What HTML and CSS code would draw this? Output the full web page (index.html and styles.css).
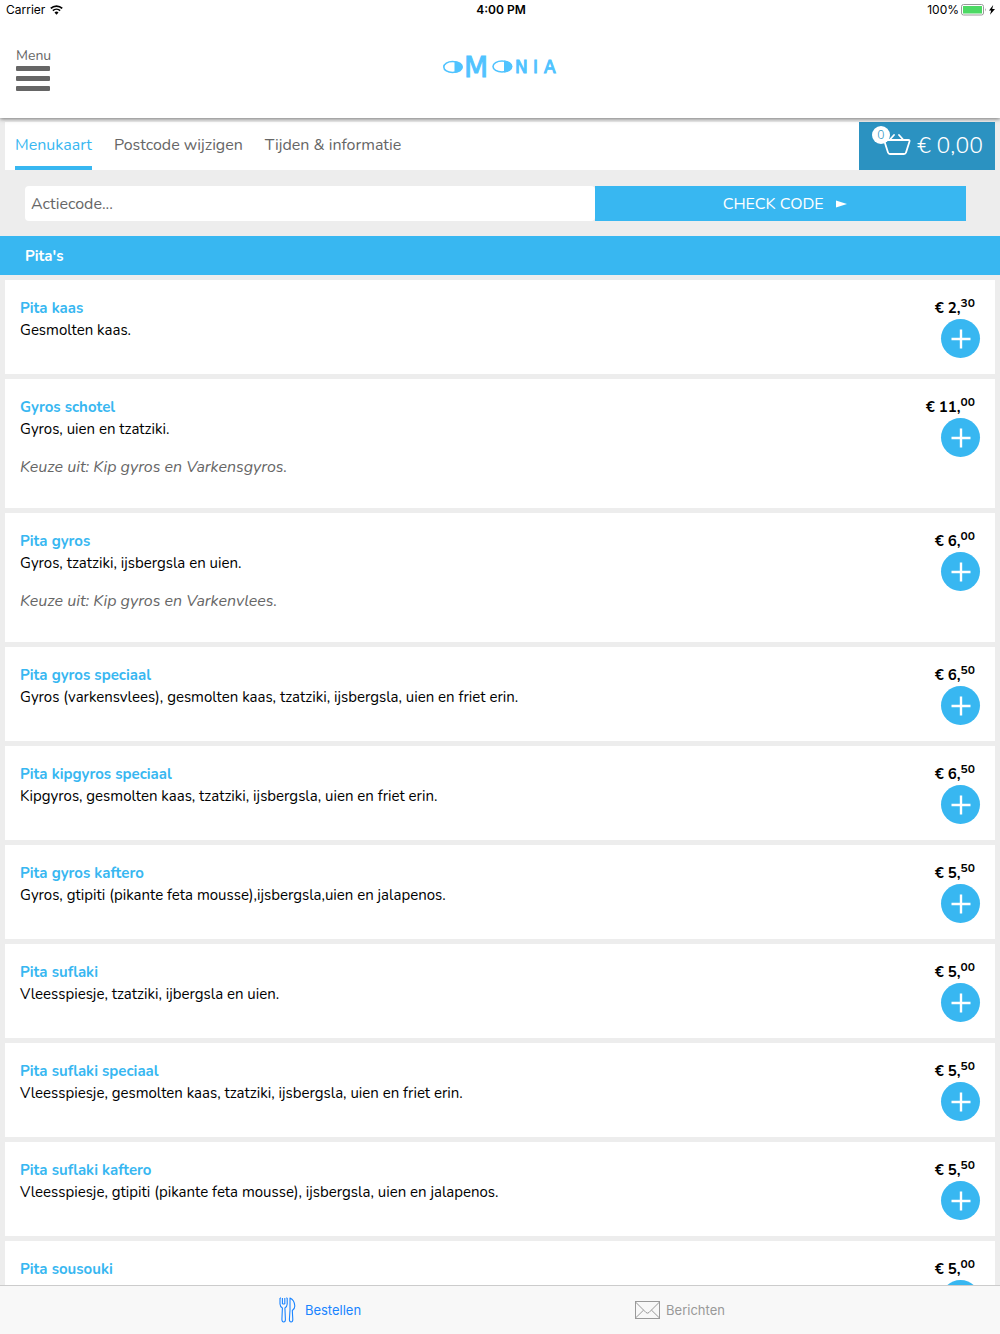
FILE: index.html
```html
<!DOCTYPE html>
<html lang="nl">
<head>
  <meta charset="UTF-8" />
  <meta name="viewport" content="width=device-width, initial-scale=1.0"/>
  <title>Omonia</title>
  <link rel="stylesheet" href="styles.css">
</head>
<body>
  <!-- Status bar -->
  <div class="status">
    <div class="status-left">
      <span>Carrier</span>
      <svg width="13" height="10" viewBox="0 0 13 10">
        <path d="M0.8 3.4 A8.2 8.2 0 0 1 12.2 3.4" fill="none" stroke="#000" stroke-width="1.8"/>
        <path d="M2.9 5.7 A5.2 5.2 0 0 1 10.1 5.7" fill="none" stroke="#000" stroke-width="1.7"/>
        <path d="M4.5 7.5 A2.9 2.9 0 0 1 8.5 7.5 L6.5 9.7 Z"/>
      </svg>
    </div>
    <div class="status-time">4:00 PM</div>
    <div class="status-right">
      <span>100%</span>
      <svg width="35" height="12" viewBox="0 0 35 12">
        <rect x="0.5" y="0.5" width="22" height="10.5" rx="2" fill="#fff" stroke="#999"/>
        <rect x="2" y="2" width="19" height="7.5" fill="#4cd964"/>
        <path d="M24 4 Q25.6 5.7 24 7.5 Z" fill="#999"/>
        <path d="M32.2 1 L28 6.6 H30.2 L29 10.8 L34 4.9 H31.2 Z"/>
      </svg>
    </div>
  </div>

  <header class="header">
    <button class="menu-btn">
      <span>Menu</span>
      <svg width="34" height="25" viewBox="0 0 34 25" fill="#666">
        <rect width="34" height="5" rx="1"/>
        <rect y="10" width="34" height="5" rx="1"/>
        <rect y="20" width="34" height="5" rx="1"/>
      </svg>
    </button>
    <svg class="logo" width="114" height="38" viewBox="0 -8 114 38" fill="#4fc3ff">
      <ellipse cx="9.5" cy="11" rx="8.7" ry="5.5" fill="none" stroke="#4fc3ff" stroke-width="1.6"/>
      <path d="M11.5 5 A8.5 6 0 0 1 11.5 17 Z"/>
      <text class="logo-big" x="21" y="21">M</text>
      <ellipse cx="59" cy="10.5" rx="9" ry="5.5" fill="none" stroke="#4fc3ff" stroke-width="1.6"/>
      <path d="M61 4.5 A8.5 6 0 0 1 61 16.5 Z"/>
      <text class="logo-small" x="72" y="17">N</text>
      <text class="logo-small" x="90" y="17">I</text>
      <text class="logo-small" x="101" y="17">A</text>
    </svg>
  </header>

  <main class="content">
    <nav class="tabs">
      <a class="tab active" href="#">Menukaart</a>
      <a class="tab" href="#">Postcode wijzigen</a>
      <a class="tab" href="#">Tijden &amp; informatie</a>
      <button class="cart">
        <span class="cart-icon">
          <svg width="28" height="24" viewBox="0 1 28 24" fill="none" stroke="#fff" stroke-width="1.8" stroke-linecap="round" stroke-linejoin="round">
            <path d="M2.5 7 H25.5 Q27 7 26.5 8.5 L23 19.5 Q22.5 21 21 21 H7 Q5.5 21 5 19.5 L1.5 8.5 Q1 7 2.5 7 Z"/>
            <path d="M6.5 7 L11 2"/>
            <path d="M20.5 7 L16 2"/>
          </svg>
          <span class="cart-count">0</span>
        </span>
        <span>€ 0,00</span>
      </button>
    </nav>

    <form class="promo">
      <input type="text" placeholder="Actiecode..." aria-label="Actiecode"/>
      <button type="button">
        <span>CHECK CODE</span>
        <svg width="11" height="8" viewBox="0 0 11 8"><path d="M0 0.5 L11 4 L0 7.5 Z" fill="#fff"/></svg>
      </button>
    </form>

    <h2 class="category">Pita's</h2>
    <div class="items" id="items"></div>
  </main>

  <footer class="tabbar">
    <a class="tabbar-item active" href="#">
      <svg width="17" height="26" viewBox="0 0 17 26" fill="none" stroke="#1a84ff" stroke-width="1.1" stroke-linejoin="round">
        <path d="M1 1 V7 Q1.2 10 3.4 11 L2.9 22.5 Q3 25 4.7 25 Q6.4 25 6.4 22.5 L5.9 11 Q8 10 8.2 7 V1 M3.4 1 V7 M5.8 1 V7 M1 1 H2 M7.2 1 H8.2 M3.4 7 H5.8"/>
        <path d="M11 1 V13 L10.4 22.5 Q10.4 25 12.1 25 Q13.8 25 13.8 22.5 L13.3 13.5 Q15.8 12 15.8 9 Q15.5 3 11 1 Z"/>
      </svg>
      <span>Bestellen</span>
    </a>
    <a class="tabbar-item" href="#">
      <svg width="25" height="18" viewBox="0 0 25 18" fill="none" stroke="#999" stroke-width="1">
        <rect x="0.5" y="0.5" width="24" height="17"/>
        <path d="M0.5 1 L11 11.5 Q12.5 12.8 14 11.5 L24.5 1"/>
        <path d="M0.5 17 L8.5 9.2"/>
        <path d="M24.5 17 L16.5 9.2"/>
      </svg>
      <span>Berichten</span>
    </a>
  </footer>

  <script src="script.js"></script>
</body>
</html>
```
FILE: styles.css
```css
* {
  box-sizing: border-box;
}
body {
  margin: 0;
  height: 100vh;
  display: flex;
  flex-direction: column;
  background: #ededed;
  color: #000;
  font-family: Nunito, 'Noto Sans', sans-serif;
  font-size: 16px;
  line-height: 22px;
}
button, input {
  font: inherit;
  border: none;
  padding: 0;
}
button {
  cursor: pointer;
}
a {
  text-decoration: none;
}
svg {
  display: block;
}

/* status bar */
.status {
  position: relative;
  z-index: 2;
  display: grid;
  grid-template-columns: 1fr auto 1fr;
  align-items: center;
  height: 20px;
  padding: 0 4px 0 6px;
  background: #fff;
  font-family: Inter, sans-serif;
  font-size: 12px;
  line-height: 20px;
}
.status-left, .status-right {
  display: flex;
  align-items: center;
  gap: 5px;
}
.status-right {
  justify-content: flex-end;
  gap: 2px;
}
.status-time {
  font-weight: 600;
}

/* header */
.header {
  position: relative;
  z-index: 1;
  display: grid;
  grid-template-columns: 1fr auto 1fr;
  height: 98px;
  padding: 26px 16px 0;
  background: #fff;
  box-shadow: 0 1px 4px rgba(0, 0, 0, 0.5);
}
.menu-btn {
  justify-self: start;
  align-self: start;
  background: none;
  color: #666;
  font-size: 14px;
  line-height: 20px;
}
.logo {
  margin-top: 2px;
}
.logo-big, .logo-small {
  font-family: 'DejaVu Sans', sans-serif;
  font-size: 17px;
  stroke: #4fc3ff;
}
.logo-big {
  font-size: 28px;
}

.content {
  flex: 1;
  min-height: 0;
  overflow-y: auto;
  scrollbar-width: none;
}

/* tabs + cart */
.tabs {
  display: flex;
  gap: 22px;
  height: 48px;
  margin: 4px 5px 0;
  padding-left: 10px;
  background: #fff;
}
.tab {
  padding-top: 12px;
  color: #666;
}
.tab.active {
  color: #38b7f1;
  border-bottom: 4px solid #38b7f1;
}
.cart {
  display: flex;
  align-items: center;
  gap: 6px;
  margin-left: auto;
  padding: 0 12px 0 24px;
  background: #2b92c1;
  color: #fff;
  font-size: 23px;
  font-weight: 300;
}
.cart-icon {
  position: relative;
}
.cart-count {
  position: absolute;
  top: -8px;
  left: -11px;
  width: 18px;
  height: 18px;
  border-radius: 50%;
  background: #fff;
  color: #2b92c1;
  font-size: 12px;
  line-height: 18px;
  text-align: center;
}

/* promo code */
.promo {
  display: grid;
  grid-template-columns: 20fr 13fr;
  padding: 16px 34px 15px 25px;
}
.promo input {
  min-width: 0;
  height: 35px;
  padding: 0 6px;
  border-radius: 4px;
  background: #fff;
}
.promo input::placeholder {
  color: #666;
  opacity: 1;
}
.promo button {
  display: flex;
  align-items: center;
  justify-content: center;
  gap: 12px;
  padding-left: 8px;
  background: #38b7f1;
  color: #fff;
}

.category {
  margin: 0 0 5px;
  padding: 9px 25px 8px;
  background: #38b7f1;
  color: #fff;
  font-size: 15px;
}

/* menu items */
.items {
  display: flex;
  flex-direction: column;
  gap: 5px;
  padding: 0 5px 5px;
}
.item {
  display: flex;
  justify-content: space-between;
  padding: 17px 15px 16px;
  background: #fff;
}
.item-name {
  margin: 0;
  color: #38b7f1;
  font-size: 15px;
}
.item-desc {
  margin: 0;
  font-size: 15px;
}
.item-note {
  margin: 16px 0 14px;
  color: #666;
  font-style: italic;
}
.item-side {
  display: flex;
  flex-direction: column;
  align-items: flex-end;
}
.price {
  padding-right: 5px;
  font-size: 15px;
  font-weight: bold;
}
.price sup {
  font-size: 12px;
  line-height: 0;
}
.add {
  display: flex;
  align-items: center;
  justify-content: center;
  width: 39px;
  height: 39px;
  border-radius: 50%;
  background: #38b7f1;
}

/* bottom bar */
.tabbar {
  display: flex;
  justify-content: center;
  height: 49px;
  border-top: 1px solid #ccc;
  background: #f8f8f8;
  font-family: Inter, sans-serif;
  font-size: 13px;
}
.tabbar-item {
  flex: 0 0 36%;
  display: flex;
  align-items: center;
  justify-content: center;
  gap: 6px;
  color: #999;
}
.tabbar-item.active {
  gap: 9px;
  color: #1a84ff;
}
```
FILE: script.js
```js
const items = [
  { name: "Pita kaas", desc: "Gesmolten kaas.", price: "2,30" },
  { name: "Gyros schotel", desc: "Gyros, uien en tzatziki.", note: "Keuze uit: Kip gyros en Varkensgyros.", price: "11,00" },
  { name: "Pita gyros", desc: "Gyros, tzatziki, ijsbergsla en uien.", note: "Keuze uit: Kip gyros en Varkenvlees.", price: "6,00" },
  { name: "Pita gyros speciaal", desc: "Gyros (varkensvlees), gesmolten kaas, tzatziki, ijsbergsla, uien en friet erin.", price: "6,50" },
  { name: "Pita kipgyros speciaal", desc: "Kipgyros, gesmolten kaas, tzatziki, ijsbergsla, uien en friet erin.", price: "6,50" },
  { name: "Pita gyros kaftero", desc: "Gyros, gtipiti (pikante feta mousse),ijsbergsla,uien en jalapenos.", price: "5,50" },
  { name: "Pita suflaki", desc: "Vleesspiesje, tzatziki, ijbergsla en uien.", price: "5,00" },
  { name: "Pita suflaki speciaal", desc: "Vleesspiesje, gesmolten kaas, tzatziki, ijsbergsla, uien en friet erin.", price: "5,50" },
  { name: "Pita suflaki kaftero", desc: "Vleesspiesje, gtipiti (pikante feta mousse), ijsbergsla, uien en jalapenos.", price: "5,50" },
  { name: "Pita sousouki", desc: "Gekruide gehakt, tzatziki, ijsbergsla en uien.", price: "5,00" }
];

document.getElementById('items').innerHTML = items.map(item => {
  const [euros, cents] = item.price.split(',');
  return `
    <article class="item">
      <div>
        <h3 class="item-name">${item.name}</h3>
        <p class="item-desc">${item.desc}</p>
        ${item.note ? `<p class="item-note">${item.note}</p>` : ''}
      </div>
      <div class="item-side">
        <div class="price">€ ${euros},<sup>${cents}</sup></div>
        <button class="add" aria-label="${item.name} toevoegen">
          <svg width="20" height="20" viewBox="0 0 20 20"><path d="M10 0.5 V19.5 M0.5 10 H19.5" stroke="#fff" stroke-width="2.4"/></svg>
        </button>
      </div>
    </article>`;
}).join('');
```
